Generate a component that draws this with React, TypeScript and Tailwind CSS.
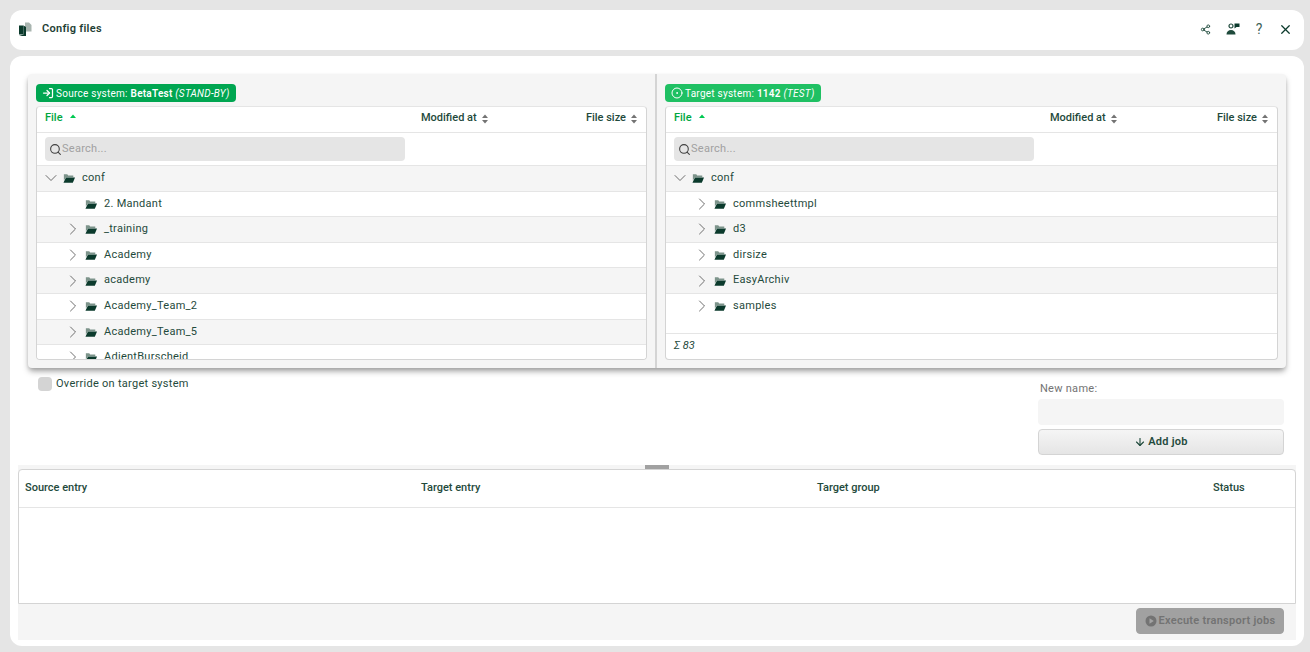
import { ChevronDown, ChevronRight, CircleDot, LogIn, ArrowDown, Search, Share2, X } from "lucide-react";

const sourceRows = [
  { name: "conf", open: true },
  { name: "2. Mandant", leaf: true },
  { name: "_training" },
  { name: "Academy" },
  { name: "academy" },
  { name: "Academy_Team_2" },
  { name: "Academy_Team_5" },
  { name: "AdientBurscheid" },
];

const targetRows = [
  { name: "conf", open: true },
  { name: "commsheettmpl" },
  { name: "d3" },
  { name: "dirsize" },
  { name: "EasyArchiv" },
  { name: "samples" },
];

const FolderIcon = () => (
  <svg viewBox="0 0 14 11" className="w-3 h-2.5 shrink-0">
    <path d="M1 1h4l1 1.5h6v2H3.5L1 8.5z" fill="#7d948b" />
    <path d="M3.5 5H14l-2.5 6H0.5z" fill="#0b3a2c" />
  </svg>
);

const SortIcon = ({ active }: { active?: boolean }) => (
  <svg viewBox="0 0 8 12" className={active ? "w-2 h-3 text-green-500" : "w-2 h-3 text-neutral-500"}>
    <path d="M4 1.5 7 5H1z" fill="currentColor" />
    {!active && <path d="M4 10.5 1 7h6z" fill="currentColor" />}
  </svg>
);

const FileRow = ({ row, index }: { row: { name: string; open?: boolean; leaf?: boolean }; index: number }) => (
  <div className={index % 2 === 0 ? "h-[25.6px] shrink-0 flex items-center bg-neutral-100 border-t border-neutral-200" : "h-[25.6px] shrink-0 flex items-center bg-white border-t border-neutral-200"}>
    <div className={row.open ? "pl-2 flex items-center gap-1 text-[#1f4a3c]" : "pl-7.5 flex items-center gap-1 text-[#1f4a3c]"}>
      <span className="w-3.5 pr-0.5 flex justify-center text-neutral-600">
        {row.open && <ChevronDown size={20} strokeWidth={1} className="shrink-0" />}
        {!row.open && !row.leaf && <ChevronRight size={20} strokeWidth={1} className="shrink-0" />}
      </span>
      <FolderIcon />
      <span className="ml-0.75 tracking-wide">{row.name}</span>
    </div>
  </div>
);

const FileTable = ({ rows, footer }: { rows: { name: string; open?: boolean; leaf?: boolean }[]; footer?: string }) => (
  <div className="flex flex-col border border-neutral-300 border-t-neutral-200 rounded-sm bg-white overflow-hidden">
    <div className="h-6.5 pb-0.5 flex items-center border-b border-neutral-200 font-medium text-[#1f4a3c]">
      <div className="w-96 pl-2 flex items-center gap-1.5 text-green-600">
        File <SortIcon active />
      </div>
      <div className="flex items-center gap-1">
        Modified at <SortIcon />
      </div>
      <div className="ml-auto pr-2 flex items-center gap-1">
        File size <SortIcon />
      </div>
    </div>
    <div className="h-8 flex items-center px-2">
      <div className="w-90 h-6 flex items-center pl-1 bg-neutral-200 rounded-sm text-neutral-400 tracking-wide">
        <Search size={13} className="text-neutral-700" />
        Search...
      </div>
    </div>
    <div className={footer ? "h-42 overflow-hidden" : "h-48.5 overflow-hidden"}>
      {rows.map((row, i) => (
        <FileRow key={row.name} row={row} index={i} />
      ))}
    </div>
    {footer && <div className="h-6.5 flex items-center pl-2 border-t border-neutral-200 italic text-[#1f4a3c]">{footer}</div>}
  </div>
);

const App = () => {
  return (
    <div className="h-screen flex flex-col gap-1.5 pl-2.5 pr-1.5 pt-2.5 pb-1.5 bg-neutral-200 font-['Roboto',sans-serif] text-[11px]">
      <header className="h-10 shrink-0 pb-0.5 flex items-center bg-white rounded-xl pl-2 pr-1.5">
        <svg viewBox="0 0 14 14" className="w-3.5 h-3.5 shrink-0">
          <path d="M7 0.5h4l2.5 2.5v6.5H7z" fill="#a9b5b0" />
          <path d="M1 3.5h4.5v9H1z" fill="#0b3a2c" />
          <path d="M5.5 3.5 8 5v9H1l4.5-1.5z" fill="#0b3a2c" />
        </svg>
        <span className="ml-2.5 font-semibold text-[#1f3f35] tracking-wide">Config files</span>
        <div className="ml-auto flex items-center text-[#1f4a3c]">
          <span className="w-6.5 mr-0.5 flex justify-center">
            <Share2 size={11} />
          </span>
          <span className="w-6.5 flex justify-center">
            <svg viewBox="0 0 14 12" className="w-3.5 h-3">
              <circle cx="5" cy="3" r="2" fill="none" stroke="#1f4a3c" strokeWidth="1.2" />
              <path d="M0.5 11.5c0-3 2-4.5 4.5-4.5s4.5 1.5 4.5 4.5z" fill="#1f4a3c" />
              <path d="M8.5 0.5h5v3.5h-3l-2 1.5z" fill="#0b3a2c" />
            </svg>
          </span>
          <span className="w-6.5 flex justify-center text-sm leading-none text-[#3f6358]">?</span>
          <span className="w-6.5 flex justify-center">
            <X size={15} strokeWidth={2} className="text-[#0b3a2c]" />
          </span>
        </div>
      </header>

      <main className="flex-1 min-h-0 flex flex-col bg-white rounded-xl pt-4.5 px-2 pb-1.5">
        <div className="px-2.5">
          <div className="grid grid-cols-2 bg-neutral-100 rounded-sm shadow-md shadow-neutral-400">
            <section className="flex flex-col px-2 pt-2.5 pb-2 border-r-2 border-neutral-300">
              <div className="self-start h-4.5 mb-1 flex items-center gap-0.5 px-1.5 bg-[#00a651] text-white text-[10px] tracking-wide rounded-sm">
                <LogIn size={12} strokeWidth={2.5} />
                <span>
                  Source system: <b className="font-semibold">BetaTest</b> <i>(STAND-BY)</i>
                </span>
              </div>
              <FileTable rows={sourceRows} />
            </section>
            <section className="flex flex-col px-2 pt-2.5 pb-2">
              <div className="self-start h-4.5 mb-1 flex items-center gap-0.5 px-1.5 bg-[#1fc063] text-white text-[10px] tracking-wide rounded-sm">
                <CircleDot size={12} strokeWidth={2} />
                <span>
                  Target system: <b className="font-semibold">1142</b> <i>(TEST)</i>
                </span>
              </div>
              <FileTable rows={targetRows} footer="Σ 83" />
            </section>
          </div>

          <div className="flex justify-between">
            <label className="mt-2 ml-2.5 h-4 flex items-center gap-1 text-[#1f4a3c] tracking-wide">
              <span className="w-3.5 h-3.5 rounded-sm bg-neutral-300" />
              Override on target system
            </label>
            <div className="w-61.5 mr-0.5 mt-3.25 flex flex-col">
              <span className="leading-4 text-neutral-500 tracking-wide pl-0.5">New name:</span>
              <div className="h-6.5 mt-0.5 bg-neutral-100 rounded-sm" />
              <button className="h-6.5 mt-1 flex items-center justify-center gap-0.5 font-semibold text-[#1f4a3c] tracking-wide bg-gradient-to-b from-neutral-100 to-neutral-200 border border-neutral-300 rounded-sm">
                <ArrowDown size={12} strokeWidth={2.25} />
                Add job
              </button>
            </div>
          </div>
        </div>

        <div className="flex-1 min-h-0 mt-2.5 flex flex-col bg-neutral-100">
          <div className="h-1 shrink-0 flex justify-center">
            <span className="w-6 h-1 bg-neutral-400" />
          </div>
          <div className="flex-1 min-h-0 bg-white border border-neutral-300 rounded-t-sm">
            <div className="h-9.5 flex items-center border-b border-neutral-200 font-medium text-[#1f4a3c]">
              <div className="flex-1 pl-1.5">Source entry</div>
              <div className="flex-1 pl-1.5">Target entry</div>
              <div className="flex-1 pl-1.5">Target group</div>
              <div className="w-22 pl-1.5">Status</div>
            </div>
          </div>
          <div className="h-9 shrink-0 pb-0.5 flex items-center justify-end pr-3">
            <button className="w-37 h-6.5 flex items-center justify-center gap-0.5 font-semibold text-neutral-500 tracking-wide bg-neutral-400 border border-neutral-400 rounded-sm">
              <svg viewBox="0 0 12 12" className="w-3 h-3 shrink-0">
                <circle cx="6" cy="6" r="5.5" fill="#737373" />
                <path d="M4.5 3.2 8.8 6 4.5 8.8z" fill="#a3a3a3" />
              </svg>
              Execute transport jobs
            </button>
          </div>
        </div>
      </main>
    </div>
  );
};

export default App;
